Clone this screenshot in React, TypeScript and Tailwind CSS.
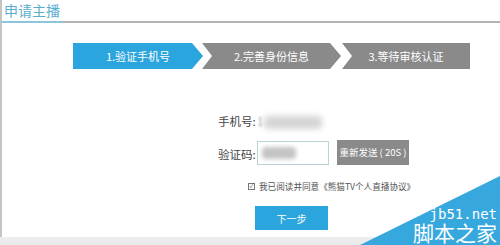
export default function App() {
  return (
    <div className="relative w-[500px] h-[245px] overflow-hidden bg-white font-['Noto_Sans_CJK_SC',sans-serif]">
      <div className="flex flex-col h-[237px] border-l-2 border-[#c4c4c4]">
        {/* Header */}
        <div className="h-[21px] pl-[2px] text-[14px] leading-[20px] text-[#5aaed0]">申请主播</div>
        <div className="flex h-[2px] bg-[#b4b4b4]">
          <div className="w-[60px] bg-[#8cc6dc]" />
        </div>

        {/* Steps */}
        <div className="flex mt-[20px] ml-[71px] h-[26px] text-[11px] text-white">
          <div className="w-[130px] flex items-center justify-center bg-[#2ba5dd] [clip-path:polygon(0_0,119px_0,130px_50%,119px_100%,0_100%)]">
            1.验证手机号
          </div>
          <div className="w-[139px] -ml-[1px] flex items-center justify-center bg-[#8a8a8a] [clip-path:polygon(0_0,128px_0,139px_50%,128px_100%,0_100%,10px_50%)]">
            2.完善身份信息
          </div>
          <div className="w-[128px] ml-[1px] flex items-center justify-center bg-[#8a8a8a] [clip-path:polygon(0_0,100%_0,100%_100%,0_100%,10px_50%)]">
            3.等待审核认证
          </div>
        </div>

        {/* Form */}
        <div className="flex flex-col pl-[216px] text-[#444]">
          <div className="flex items-center h-[20px] mt-[43px] text-[11.5px]">
            <span className="w-[39px]">手机号:</span>
            <span className="text-[#aaa] blur-[1px]">1</span>
            <div className="ml-[1px] w-[58px] h-[13px] rounded bg-[#d4d4d4] blur-[3px]" />
          </div>
          <div className="flex items-center mt-[8px] text-[11.5px]">
            <span className="w-[39px] pt-[4px]">验证码:</span>
            <div className="w-[72px] h-[24px] flex items-center border border-[#b8d2d6] bg-white pl-[4px]">
              <div className="w-[34px] h-[12px] rounded bg-[#c4c4c4] blur-[2px]" />
            </div>
            <div className="ml-[8px] w-[72px] h-[25px] flex items-center justify-center bg-[#8a8a8a] text-[9.5px] text-white">
              重新发送 ( 20S )
            </div>
          </div>
          <div className="flex items-center h-[12px] mt-[15px] ml-[30px] text-[8.6px] text-[#555] whitespace-nowrap">
            <span className="w-[7px] h-[7px] mr-[4px] border border-[#777] flex items-center justify-center text-[6px] leading-none">✓</span>
            我已阅读并同意《熊猫TV个人直播协议》
          </div>
          <div className="mt-[14px] ml-[37px] w-[73px] h-[24px] flex items-center justify-center bg-[#2ba5dd] text-[10px] text-white">
            下一步
          </div>
        </div>
      </div>
      <div className="h-[8px] bg-[#ececec]" />

      {/* Watermark */}
      <div className="absolute inset-0 bg-[#36a8dd] [clip-path:polygon(360px_245px,500px_176px,500px_245px)]" />
      <div className="absolute right-[3px] bottom-[2px] flex flex-col items-end text-white">
        <span className="text-[14px] leading-[14px] font-['DejaVu_Sans_Mono',monospace]">jb51.net</span>
        <span className="text-[21px] leading-[22px]">脚本之家</span>
      </div>
    </div>
  )
}
